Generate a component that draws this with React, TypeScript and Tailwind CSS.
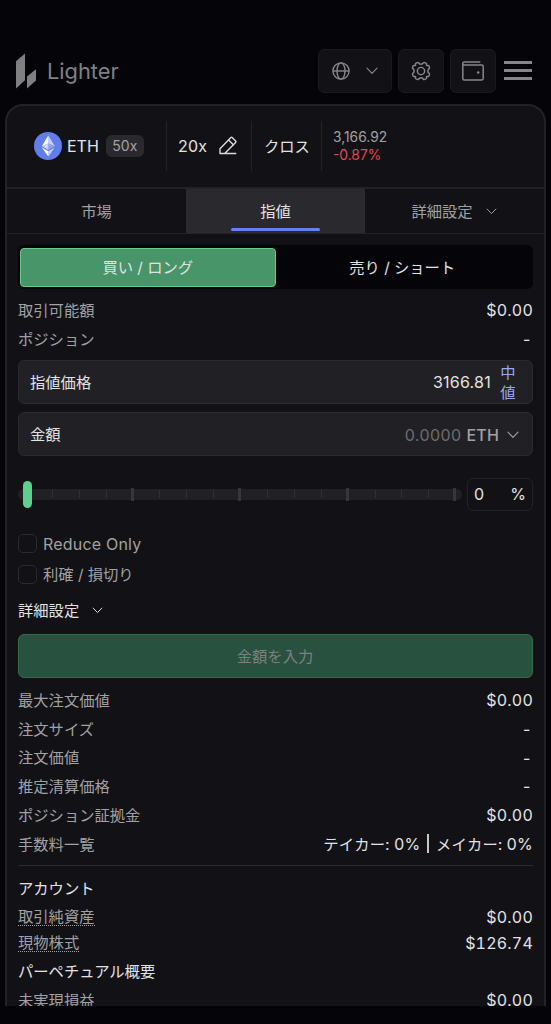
import { useState } from "react";
import type { ReactNode } from "react";
import clsx from "clsx";

interface StatRowProps {
  label: string;
  value?: ReactNode;
  dotted?: boolean;
  heading?: boolean;
  className?: string;
}

function ChevronDown({ className }: { className?: string }) {
  return (
    <svg viewBox="0 0 12 8" fill="none" stroke="currentColor" className={className}>
      <path d="M1 1.2 6 6.4 11 1.2" strokeWidth="1.1" strokeLinecap="round" strokeLinejoin="round" />
    </svg>
  );
}

function Logo() {
  return (
    <svg width="20" height="36" viewBox="0 0 20 36" fill="#808083">
      <path d="M0 8.2 9 0.5V27.2L0 35.5Z" />
      <path d="M11 23.5 20 16.2V27.4L11 35.5Z" />
    </svg>
  );
}

function GlobeIcon() {
  return (
    <svg width="18" height="18" viewBox="0 0 18 18" fill="none" stroke="#87878a" strokeWidth="1.4">
      <circle cx="9" cy="9" r="8.1" />
      <ellipse cx="9" cy="9" rx="4" ry="8.1" />
      <path d="M.9 9H17.1" />
    </svg>
  );
}

function GearIcon() {
  return (
    <svg width="20" height="20" viewBox="-10.2 -10.2 20.4 20.4" fill="none" stroke="#87878a" strokeWidth="1.5" strokeLinejoin="round">
      <circle r="3.7" />
      <path d="M-1.6 -7.4Q0 -6.6 1.6 -7.4L2.4 -8.3Q3 -8.9 3.8 -8.6L5 -8.1Q5.8 -7.7 5.7 -7L5.5 -6.1Q5.5 -5.5 6.1 -5.5L7 -5.7Q7.7 -5.8 8.1 -5L8.6 -3.8Q8.9 -3 8.3 -2.4L7.4 -1.6Q6.6 0 7.4 1.6L8.3 2.4Q8.9 3 8.6 3.8L8.1 5Q7.7 5.8 7 5.7L6.1 5.5Q5.5 5.5 5.5 6.1L5.7 7Q5.8 7.7 5 8.1L3.8 8.6Q3 8.9 2.4 8.3L1.6 7.4Q0 6.6 -1.6 7.4L-2.4 8.3Q-3 8.9 -3.8 8.6L-5 8.1Q-5.8 7.7 -5.7 7L-5.5 6.1Q-5.5 5.5 -6.1 5.5L-7 5.7Q-7.7 5.8 -8.1 5L-8.6 3.8Q-8.9 3 -8.3 2.4L-7.4 1.6Q-6.6 0 -7.4 -1.6L-8.3 -2.4Q-8.9 -3 -8.6 -3.8L-8.1 -5Q-7.7 -5.8 -7 -5.7L-6.1 -5.5Q-5.5 -5.5 -5.5 -6.1L-5.7 -7Q-5.8 -7.7 -5 -8.1L-3.8 -8.6Q-3 -8.9 -2.4 -8.3Z" />
    </svg>
  );
}

function WalletIcon() {
  return (
    <svg width="22" height="20" viewBox="0 0 22 20" fill="none" stroke="#87878a" strokeWidth="1.5">
      <path d="M18.3 .9H2.2C1.3.9.8 1.5.8 2.3V17.5C.8 18.4 1.4 19 2.2 19H19.8C20.7 19 21.2 18.4 21.2 17.6V5.4C21.2 4.6 20.7 4.1 19.9 4.1H2.3C1.4 4.1.8 3.4.8 2.4" />
      <circle cx="16.2" cy="11.5" r="1.3" fill="#87878a" stroke="none" />
    </svg>
  );
}

function EthIcon() {
  return (
    <svg width="28" height="28" viewBox="0 0 28 28" className="-mt-px">
      <circle cx="14" cy="14" r="14" fill="#627eea" />
      <path d="M14.3 3.6V11.3L20.8 14.2Z" fill="#fff" fillOpacity=".65" />
      <path d="M14.3 3.6 7.8 14.2 14.3 11.3Z" fill="#fff" />
      <path d="M14.3 11.3V18L20.8 14.2Z" fill="#fff" fillOpacity=".3" />
      <path d="M7.8 14.2 14.3 18V11.3Z" fill="#fff" fillOpacity=".65" />
      <path d="M14.3 19.2V24.4L20.8 15.4Z" fill="#fff" fillOpacity=".65" />
      <path d="M14.3 24.4V19.2L7.8 15.4Z" fill="#fff" />
    </svg>
  );
}

function EditIcon() {
  return (
    <svg width="18" height="19" viewBox="0 0 18 19" fill="none" stroke="#d9d9da" strokeWidth="1.4" strokeLinecap="round" strokeLinejoin="round" className="-mt-px">
      <path d="M6.2 17.5H1V12.8L11.9 1.6C12.3 1.2 12.8 1.2 13.2 1.6L16.6 5.1C17 5.5 17 6 16.6 6.4L5.7 17.5H16.8" />
      <path d="M9.6 4 14.3 8.7" />
    </svg>
  );
}

function StatRow({ label, value, dotted, heading, className }: StatRowProps) {
  return (
    <div className={clsx("flex items-center justify-between", className ?? "h-[28.8px]")}>
      <span
        className={clsx(
          heading ? "text-[#e2e2e4]" : "text-[#a1a1a3]",
          "pt-[1.5px]",
          dotted && "border-b border-dotted border-[#a1a1a3] leading-[16px]"
        )}
      >
        {label}
      </span>
      <span className={clsx("text-base tracking-[0.2px] tabular-nums text-[#e2e2e4]", value === "-" && "pr-px")}>
        {value}
      </span>
    </div>
  );
}

function CheckRow({ label, className }: { label: string; className?: string }) {
  const [checked, setChecked] = useState(false);

  return (
    <button
      className={clsx("flex h-[31.5px] items-center gap-1.5 text-[#a1a1a3]", className)}
      onClick={() => setChecked(!checked)}
    >
      <span className={clsx("size-[19px] rounded-[5px] border border-[#2b2b2f]", checked && "bg-[#5fcf8e]")} />
      <span className="pt-px">{label}</span>
    </button>
  );
}

const sliderTicks = Array.from({ length: 16 }, (_, i) => i + 1);

function AmountSlider() {
  return (
    <div className="relative flex h-[11px] w-[444px] items-center rounded-full bg-[#212125] pl-2">
      <span className="absolute left-[5px] h-[27px] w-[9px] rounded-full bg-[#5fcf8e]" />
      {sliderTicks.map((tick) => (
        <span key={tick} className="flex w-[26.9px] justify-end">
          <span className={clsx(tick % 4 === 0 ? "h-[13px] w-[3px] bg-[#37373b]" : "h-2 w-px bg-[#303034]")} />
        </span>
      ))}
    </div>
  );
}

export default function App() {
  const [side, setSide] = useState<"long" | "short">("long");

  return (
    <div className="h-[1024px] w-[551px] overflow-hidden bg-[#050509] font-['Inter','Noto_Sans_CJK_JP',sans-serif] text-[15.3px] leading-5">
      <header className="flex h-[104px] items-start pt-[49px] pl-4">
        <div className="flex h-11 items-center gap-[11px]">
          <Logo />
          <span className="text-[21.8px] text-[#808083]">Lighter</span>
        </div>
        <div className="ml-auto flex h-11 items-center gap-[6px] pr-[19px]">
          <button className="flex h-11 w-[74px] items-center justify-between rounded-md border border-[#1b1b1f] bg-[#121216] px-[13px]">
            <GlobeIcon />
            <ChevronDown className="h-2 w-3 text-[#87878a]" />
          </button>
          <button className="flex h-11 w-[46px] items-center justify-center rounded-md border border-[#1b1b1f] bg-[#121216]">
            <GearIcon />
          </button>
          <button className="flex h-11 w-[46px] items-center justify-center rounded-md border border-[#1b1b1f] bg-[#121216]">
            <WalletIcon />
          </button>
          <button className="-mt-px ml-[2px] flex w-7 flex-col gap-[5px]">
            <span className="h-[3px] bg-[#87878a]" />
            <span className="h-[3px] bg-[#87878a]" />
            <span className="h-[3px] bg-[#87878a]" />
          </button>
        </div>
      </header>

      <main className="mx-[5px] h-[902px] overflow-hidden rounded-t-[18px] border-2 border-b-0 border-[#232327] bg-[#121216]">
        <section className="flex h-[81px] items-center pl-[27px] text-base text-[#e2e2e4]">
          <div className="-mt-px flex h-[50px] w-[133px] items-center border-r border-[#232327]">
            <EthIcon />
            <span className="ml-[5px]">ETH</span>
            <span className="ml-[7px] flex h-[22px] items-center rounded-md bg-[#2a2a2e] px-[6.5px] text-sm text-[#a1a1a3]">
              50x
            </span>
          </div>
          <div className="-mt-px flex h-[50px] w-[85px] items-center gap-3 border-r border-[#232327] pl-[11px]">
            <span className="tracking-[0.2px]">20x</span>
            <EditIcon />
          </div>
          <div className="-mt-px flex h-[50px] w-[70px] items-center border-r border-[#232327] pl-3 text-[15.3px]">
            <span className="pt-0.5">クロス</span>
          </div>
          <div className="-mt-px pl-[11px] text-[13.8px] leading-[18px]">
            <div className="text-[#a1a1a3]">3,166.92</div>
            <div className="text-[#e5484d]">-0.87%</div>
          </div>
        </section>

        <nav className="grid h-[47px] grid-cols-3 border-t-2 border-b border-[#232327] text-[#a1a1a3]">
          <button className="pt-px">市場</button>
          <button className="relative bg-[#2a2a2e] pt-px text-[#e2e2e4]">
            指値
            <span className="absolute bottom-[2px] left-[45px] h-[3px] w-[89px] rounded-full bg-[#6582f5]" />
          </button>
          <button className="flex items-center justify-center gap-[13px] pt-px pr-px">
            詳細設定
            <ChevronDown className="h-[7px] w-[11px]" />
          </button>
        </nav>

        <div className="px-[11px] pt-[11px]">
          <div className="flex h-11 rounded-md bg-[#050509] py-[2.5px] pr-1 pl-[2px] text-[#e2e2e4]">
            <button
              className={clsx("flex-1 rounded-[4px] pt-px", side === "long" && "border border-[#5fcf8e] bg-[#489569]")}
              onClick={() => setSide("long")}
            >
              買い / ロング
            </button>
            <button
              className={clsx("flex-1 rounded-[4px] pt-px", side === "short" && "border border-[#e5484d] bg-[#a8383d]")}
              onClick={() => setSide("short")}
            >
              売り / ショート
            </button>
          </div>

          <div className="mt-[7px]">
            <StatRow label="取引可能額" value="$0.00" />
            <StatRow label="ポジション" value="-" />
          </div>

          <label className="mt-[6px] flex h-11 items-center rounded-md border border-[#2a2a2e] bg-[#212125] pt-[2px] pr-4 pl-[11px] text-[#e2e2e4]">
            指値価格
            <span className="ml-auto pb-px text-base tracking-[0.25px]">3166.81</span>
            <button className="ml-[9px] w-4 text-[#95a8f5]">中値</button>
          </label>
          <label className="mt-2 flex h-11 items-center rounded-md border border-[#2a2a2e] bg-[#212125] pt-[2px] pr-[13px] pl-[11px] text-[#e2e2e4]">
            金額
            <span className="ml-auto text-base tracking-[0.4px] text-[#6c6c70]">0.0000</span>
            <span className="ml-[5px] text-base font-medium tracking-[0.2px] text-[#a1a1a3]">ETH</span>
            <ChevronDown className="ml-2 h-2 w-3 text-[#a1a1a3]" />
          </label>

          <div className="mt-[22px] flex h-[33px] items-center justify-between">
            <AmountSlider />
            <label className="flex h-[33px] w-[66px] items-center justify-between rounded-md border border-[#232327] px-[6px] text-base text-[#e2e2e4]">
              <span>0</span>
              <span>%</span>
            </label>
          </div>

          <div className="mt-[17px]">
            <CheckRow label="Reduce Only" className="text-base tracking-[0.2px]" />
            <CheckRow label="利確 / 損切り" />
          </div>

          <button className="mt-[10px] flex h-5 items-center gap-[13px] text-[#e2e2e4]">
            詳細設定
            <ChevronDown className="h-[7px] w-[11px]" />
          </button>

          <button className="mt-[13px] flex h-11 w-full items-center justify-center rounded-md border border-[#306b4b] bg-[#28523f] pt-[2px] pr-px text-[#7f7f82]">
            金額を入力
          </button>

          <div className="mt-2">
            <StatRow label="最大注文価値" value="$0.00" />
            <StatRow label="注文サイズ" value="-" />
            <StatRow label="注文価値" value="-" />
            <StatRow label="推定清算価格" value="-" />
            <StatRow label="ポジション証拠金" value="$0.00" />
            <StatRow
              label="手数料一覧"
              value={
                <span className="flex items-center gap-[7px]">
                  <span>
                    <span className="text-[15.3px]">テイカー: </span>0%
                  </span>
                  <span className="h-[19px] w-[1.5px] bg-[#c8c8ca]" />
                  <span>
                    <span className="text-[15.3px]">メイカー: </span>0%
                  </span>
                </span>
              }
            />
          </div>

          <div className="mt-[7px] border-t border-[#2a2a2e] pt-[7px]">
            <StatRow label="アカウント" heading />
            <StatRow label="取引純資産" value="$0.00" dotted />
            <StatRow label="現物株式" value="$126.74" dotted className="h-6" />
            <StatRow label="パーペチュアル概要" heading className="h-[33px]" />
            <StatRow label="未実現損益" value="$0.00" className="h-6" />
          </div>
        </div>
      </main>
    </div>
  );
}
